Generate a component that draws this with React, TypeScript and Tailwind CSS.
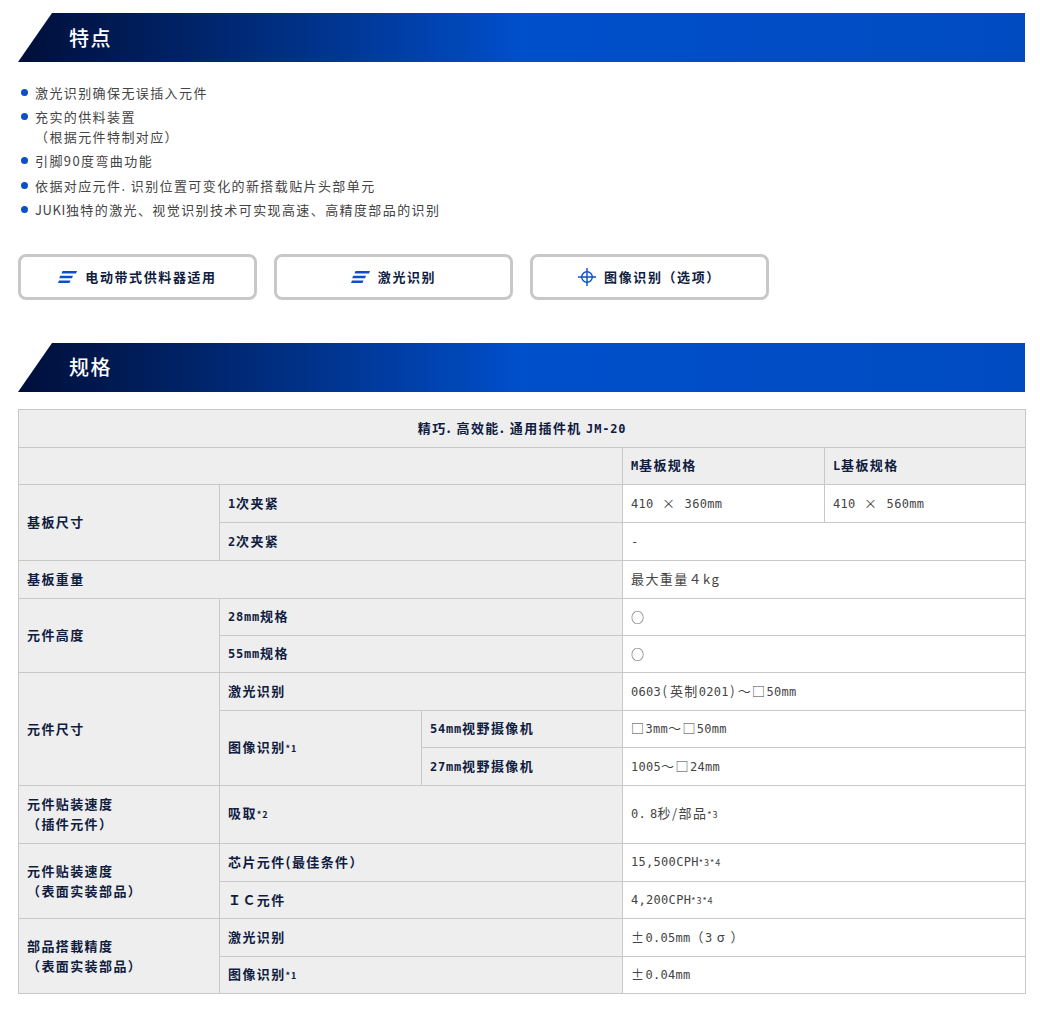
import type { ReactNode } from 'react';

const L = ({ children }: { children: ReactNode }) => (
  <span className="font-['DejaVu_Sans_Mono',monospace] text-[12px] tracking-[0.3px]">{children}</span>
);

const Note = ({ children }: { children: ReactNode }) => (
  <span className="text-[9px] tracking-[1px]">{children}</span>
);

const Paren = ({ children }: { children: ReactNode }) => (
  <span className="mx-[1.5px]">{children}</span>
);

function Heading({ title }: { title: string }) {
  return (
    <div className="h-[49px] bg-gradient-to-r from-[#000f3a] via-[#004fcb] via-50% to-[#004bc0] [clip-path:polygon(34px_0,100%_0,100%_100%,0_100%)] flex items-center pl-[51px]">
      <h2 className="text-[20px] leading-none font-medium text-white tracking-[1.5px]">{title}</h2>
    </div>
  );
}

function Th({ children, className = '', ...rest }: { children?: ReactNode; className?: string; colSpan?: number; rowSpan?: number }) {
  return (
    <td {...rest} className={`border border-[#c8c8c8] bg-[#eeeeee] pl-[8px] font-bold text-[#101c40] leading-[20px] [&>span]:tracking-[0.8px] ${className}`}>
      {children}
    </td>
  );
}

function Td({ children, ...rest }: { children?: ReactNode; colSpan?: number }) {
  return (
    <td {...rest} className="border border-[#c8c8c8] bg-white pl-[8px] text-[#444444] leading-[20px]">
      {children}
    </td>
  );
}

function BarsIcon() {
  return (
    <svg width="19" height="14" viewBox="0 0 19 14" fill="#0b50c8" className="shrink-0">
      <polygon points="4.5,1 19,1 18,3.6 3.5,3.6" />
      <polygon points="2.2,5.7 15,5.7 14,8.3 1.2,8.3" />
      <polygon points="1,10.4 12.5,10.4 11.5,13 0,13" />
    </svg>
  );
}

function TargetIcon() {
  return (
    <svg width="18" height="18" viewBox="0 0 18 18" fill="none" stroke="#0b50c8" strokeWidth="1.4" className="shrink-0">
      <circle cx="9" cy="9" r="5.3" />
      <path d="M9 0v18M0 9h18" />
    </svg>
  );
}

function FeatureButton({ icon, label }: { icon: ReactNode; label: string }) {
  return (
    <div className="w-[239px] h-[46px] border-[3px] border-[#c8c8c8] rounded-lg flex items-center justify-center gap-2 font-bold text-[13px] text-[#101c40] tracking-[1.6px]">
      {icon}
      <span>{label}</span>
    </div>
  );
}

const features: ReactNode[] = [
  '激光识别确保无误插入元件',
  <>充实的供料装置<br />（根据元件特制对应）</>,
  '引脚90度弯曲功能',
  '依据对应元件. 识别位置可变化的新搭载贴片头部单元',
  <><span className="tracking-[0.6px]">JUKI</span>独特的激光、视觉识别技术可实现高速、高精度部品的识别</>,
];

export default function App() {
  return (
    <div className="w-[1040px] min-h-[1030px] bg-white pl-[18px] pr-[15px] pt-[13px] font-['Noto_Sans_CJK_SC','Liberation_Sans',sans-serif] text-[13px] tracking-[1.4px]">
      <Heading title="特点" />

      <ul className="mt-[21px] flex flex-col gap-[4.2px] text-[#444444] leading-[20px]">
        {features.map((f, i) => (
          <li key={i} className="relative pl-[17px]">
            <span className="absolute left-[3px] top-[6px] w-[7px] h-[7px] rounded-full bg-[#0b50c8]" />
            {f}
          </li>
        ))}
      </ul>

      <div className="mt-[34.2px] flex gap-[17px]">
        <FeatureButton icon={<BarsIcon />} label="电动带式供料器适用" />
        <FeatureButton icon={<BarsIcon />} label="激光识别" />
        <FeatureButton icon={<TargetIcon />} label="图像识别（选项）" />
      </div>

      <div className="mt-[43px]">
        <Heading title="规格" />
      </div>

      <table className="mt-[17px] w-[1007px] table-fixed border-collapse">
        <colgroup>
          <col className="w-[201px]" />
          <col className="w-[202px]" />
          <col className="w-[201px]" />
          <col className="w-[202px]" />
          <col className="w-[201px]" />
        </colgroup>
        <tbody>
          <tr className="h-[38px]">
            <Th colSpan={5} className="text-center pr-[8px]">精巧. 高效能. 通用插件机 <L>JM-20</L></Th>
          </tr>
          <tr className="h-[37px]">
            <Th colSpan={3} />
            <Th><L>M</L>基板规格</Th>
            <Th><L>L</L>基板规格</Th>
          </tr>
          <tr className="h-[38px]">
            <Th rowSpan={2}>基板尺寸</Th>
            <Th colSpan={2}><L>1</L>次夹紧</Th>
            <Td><L>410</L><span className="mx-[4px]"> × </span><L>360mm</L></Td>
            <Td><L>410</L><span className="mx-[4px]"> × </span><L>560mm</L></Td>
          </tr>
          <tr className="h-[38px]">
            <Th colSpan={2}><L>2</L>次夹紧</Th>
            <Td colSpan={2}><L>-</L></Td>
          </tr>
          <tr className="h-[38px]">
            <Th colSpan={3}>基板重量</Th>
            <Td colSpan={2}>最大重量４kg</Td>
          </tr>
          <tr className="h-[37px]">
            <Th rowSpan={2}>元件高度</Th>
            <Th colSpan={2}><L>28mm</L>规格</Th>
            <Td colSpan={2}>○</Td>
          </tr>
          <tr className="h-[37px]">
            <Th colSpan={2}><L>55mm</L>规格</Th>
            <Td colSpan={2}>○</Td>
          </tr>
          <tr className="h-[38px]">
            <Th rowSpan={3}>元件尺寸</Th>
            <Th colSpan={2}>激光识别</Th>
            <Td colSpan={2}><L>0603</L><Paren>(</Paren>英制<L>0201</L><Paren>)</Paren>～□<L>50mm</L></Td>
          </tr>
          <tr className="h-[37px]">
            <Th rowSpan={2}>图像识别<Note>*1</Note></Th>
            <Th><L>54mm</L>视野摄像机</Th>
            <Td colSpan={2}>□<L>3mm</L>～□<L>50mm</L></Td>
          </tr>
          <tr className="h-[38px]">
            <Th><L>27mm</L>视野摄像机</Th>
            <Td colSpan={2}><L>1005</L>～□<L>24mm</L></Td>
          </tr>
          <tr className="h-[58px]">
            <Th>元件贴装速度<br />（插件元件）</Th>
            <Th colSpan={2}>吸取<Note>*2</Note></Th>
            <Td colSpan={2}><L>0.</L>&thinsp;<L>8</L>秒/部品<Note>*3</Note></Td>
          </tr>
          <tr className="h-[38px]">
            <Th rowSpan={2}>元件贴装速度<br />（表面实装部品）</Th>
            <Th colSpan={2}>芯片元件(最佳条件）</Th>
            <Td colSpan={2}><L>15,500CPH</L><Note>*3*4</Note></Td>
          </tr>
          <tr className="h-[37px]">
            <Th colSpan={2}>ＩＣ元件</Th>
            <Td colSpan={2}><L>4,200CPH</L><Note>*3*4</Note></Td>
          </tr>
          <tr className="h-[38px]">
            <Th rowSpan={2}>部品搭載精度<br />（表面实装部品）</Th>
            <Th colSpan={2}>激光识别</Th>
            <Td colSpan={2}>±<L>0.05mm</L>（<L>3</L> σ ）</Td>
          </tr>
          <tr className="h-[37px]">
            <Th colSpan={2}>图像识别<Note>*1</Note></Th>
            <Td colSpan={2}>±<L>0.04mm</L></Td>
          </tr>
        </tbody>
      </table>
    </div>
  );
}
